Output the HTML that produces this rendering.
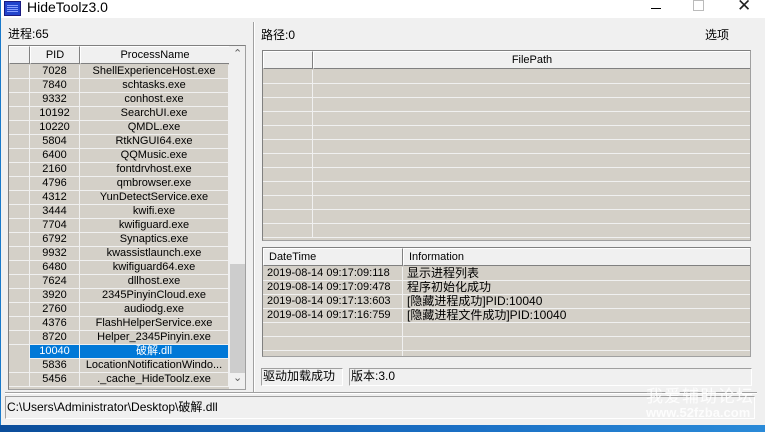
<!DOCTYPE html>
<html><head><meta charset="utf-8"><style>
*{margin:0;padding:0;box-sizing:border-box}
body{width:765px;height:432px;overflow:hidden;background:#f0f0f0;position:relative;font-family:"Liberation Sans","Noto Sans CJK SC",sans-serif;font-size:11px;color:#000}
.a{position:absolute}
.tb{left:0;top:0;width:765px;height:18px;background:#fff;border-left:1px solid #1979ca}
.tbl{background:#d4d0c8;border:1px solid #a0a0a0;border-top-color:#808080;border-left-color:#808080;overflow:hidden}
.hd{position:absolute;top:0;height:18px;background:#f0f0f0;border:1px solid #fff;border-right-color:#808080;border-bottom-color:#808080;text-align:center;line-height:16px;font-size:11px}
.row{position:absolute;left:0;height:14px;border-bottom:1px solid #f0f0f0;white-space:nowrap;line-height:13px}
.c{position:absolute;top:0;height:14px;border-right:1px solid #f0f0f0;text-align:center;overflow:hidden}
.sel{background:#0078d7;color:#fff}
.box{border:1px solid #a0a0a0;border-right-color:#fff;border-bottom-color:#fff;background:#f0f0f0;line-height:15px;padding-left:1px;font-size:12px}
</style></head><body>
<div class="a tb"></div>
<div class="a" style="left:4px;top:1px;width:17px;height:15px;background:#2244cc;border:1px solid #1a1a80"><div style="margin:3px 2px;height:1px;background:#88a0ff;box-shadow:0 2px #88a0ff,0 4px #88a0ff,0 6px #88a0ff"></div></div>
<div class="a" style="left:27px;top:-1px;font-size:14px">HideToolz3.0</div>
<div class="a" style="left:651px;top:8px;width:10px;height:1px;background:#000"></div>
<div class="a" style="left:693px;top:0px;width:11px;height:11px;border:1px solid #bbb"></div>
<div class="a" style="left:737px;top:-4px;font-size:17px;color:#222">✕</div>
<div class="a" style="left:0;top:18px;width:1px;height:407px;background:#1979ca"></div>

<div class="a" style="left:8px;top:25px;font-size:12px">进程:65</div>
<div class="a" style="left:261px;top:26px;font-size:12px">路径:0</div>
<div class="a" style="left:705px;top:26px;font-size:12px">选项</div>
<div class="a" style="left:253px;top:22px;width:1px;height:370px;background:#a0a0a0;border-right:1px solid #fff;width:2px"></div>
<div class="a" style="left:5px;top:392px;width:752px;height:2px;border-top:1px solid #a0a0a0;border-bottom:1px solid #fff"></div>

<div class="a tbl" style="left:8px;top:45px;width:238px;height:345px">
 <div class="hd" style="left:0;width:21px"></div>
 <div class="hd" style="left:21px;width:50px">PID</div>
 <div class="hd" style="left:71px;width:150px">ProcessName</div>
 <div id="pl"></div>
 <div class="a" style="left:220px;top:0;width:17px;height:345px;background:#f0f0f0"></div>
 <div class="a" style="left:221px;top:218px;width:15px;height:109px;background:#cdcdcd"></div>
 <div class="a" style="left:224px;top:1px;font-size:11px;color:#606060">&#8963;</div>
 <div class="a" style="left:224px;top:325px;font-size:11px;color:#606060">&#8964;</div>
</div>

<div class="a tbl" style="left:262px;top:50px;width:489px;height:191px">
 <div class="hd" style="left:0;width:50px"></div>
 <div class="hd" style="left:50px;width:438px">FilePath</div>
 <div id="fl"></div>
</div>

<div class="a tbl" style="left:262px;top:247px;width:489px;height:110px">
 <div class="hd" style="left:0;width:140px;text-align:left;padding-left:5px">DateTime</div>
 <div class="hd" style="left:140px;width:348px;text-align:left;padding-left:5px">Information</div>
 <div id="ll"></div>
</div>

<div class="a box" style="left:261px;top:368px;width:82px;height:18px">驱动加载成功</div>
<div class="a box" style="left:349px;top:368px;width:403px;height:18px">版本:3.0</div>
<div class="a box" style="left:5px;top:396px;width:750px;height:23px;line-height:20px">C:\Users\Administrator\Desktop\破解.dll</div>
<div class="a" style="left:0;top:425px;width:765px;height:7px;background:linear-gradient(90deg,#0b4d9a,#1a6fc4 60%,#2a8ad8)"></div>
<div class="a" style="left:646px;top:382px;font-size:17px;color:rgba(255,255,255,.85);letter-spacing:1px">我爱辅助论坛</div>
<div class="a" style="left:646px;top:405px;font-size:13px;font-weight:bold;color:rgba(255,255,255,.85)">www.52fzba.com</div>

<script>
var p=[["7028","ShellExperienceHost.exe"],["7840","schtasks.exe"],["9332","conhost.exe"],["10192","SearchUI.exe"],["10220","QMDL.exe"],["5804","RtkNGUI64.exe"],["6400","QQMusic.exe"],["2160","fontdrvhost.exe"],["4796","qmbrowser.exe"],["4312","YunDetectService.exe"],["3444","kwifi.exe"],["7704","kwifiguard.exe"],["6792","Synaptics.exe"],["9932","kwassistlaunch.exe"],["6480","kwifiguard64.exe"],["7624","dllhost.exe"],["3920","2345PinyinCloud.exe"],["2760","audiodg.exe"],["4376","FlashHelperService.exe"],["8720","Helper_2345Pinyin.exe"],["10040","破解.dll"],["5836","LocationNotificationWindo..."],["5456","._cache_HideToolz.exe"]];
var h="";p.forEach(function(r,i){var s=r[0]=="10040";h+='<div class="row'+(s?' sel':'')+'" style="top:'+(19+i*14)+'px;width:220px"><div class="c" style="left:0;width:21px'+(s?';background:#d4d0c8':'')+'"></div><div class="c" style="left:21px;width:50px">'+r[0]+'</div><div class="c" style="left:71px;width:149px">'+r[1]+'</div></div>'});
document.getElementById("pl").innerHTML=h;
h="";for(var i=0;i<12;i++)h+='<div class="row" style="top:'+(19+i*14)+'px;width:489px"><div class="c" style="left:0;width:50px"></div></div>';
document.getElementById("fl").innerHTML=h;
var l=[["2019-08-14 09:17:09:118","显示进程列表"],["2019-08-14 09:17:09:478","程序初始化成功"],["2019-08-14 09:17:13:603","[隐藏进程成功]PID:10040"],["2019-08-14 09:17:16:759","[隐藏进程文件成功]PID:10040"],["",""],["",""],["",""]];
h="";l.forEach(function(r,i){h+='<div class="row" style="top:'+(19+i*14)+'px;width:489px"><div class="c" style="left:0;width:140px;text-align:left;padding-left:4px">'+r[0]+'</div><div class="c" style="left:140px;width:349px;text-align:left;padding-left:4px;font-size:12px">'+r[1]+'</div></div>'});
document.getElementById("ll").innerHTML=h;
</script>
</body></html>
